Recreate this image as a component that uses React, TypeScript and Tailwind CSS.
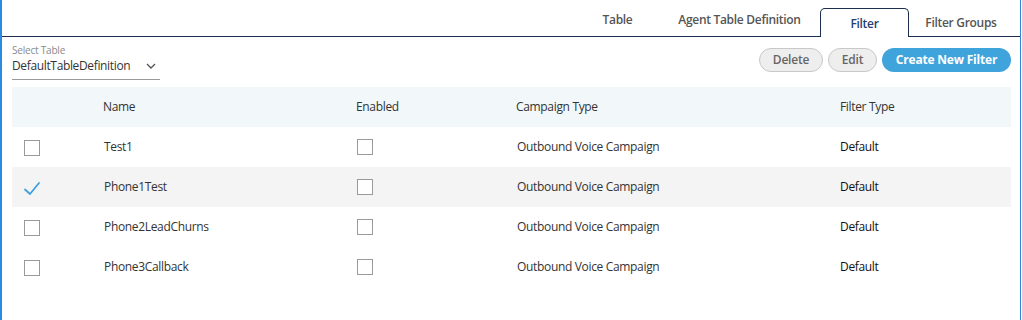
import React from "react";

const rows = [
  { name: "Test1", checked: false },
  { name: "Phone1Test", checked: true },
  { name: "Phone2LeadChurns", checked: false },
  { name: "Phone3Callback", checked: false },
];

function Box({ className = "" }: { className?: string }) {
  return <div className={`w-4 h-4 border border-[#9a9a9a] bg-white ${className}`} />;
}

function Check() {
  return (
    <svg width="18" height="16" viewBox="0 0 18 16" className="ml-[-1px] mt-[1px]">
      <path d="M2 9.5 L7 14 L16 3" fill="none" stroke="#3f9fdc" strokeWidth="1.8" strokeLinecap="round" strokeLinejoin="round" />
    </svg>
  );
}

export default function App() {
  const font = { fontFamily: '"Open Sans", "Noto Sans", sans-serif' };
  return (
    <div className="w-[1022px] h-[320px] bg-white overflow-hidden" style={font}>
      <div className="w-[1021px] h-[320px] border-l-2 border-r border-[#2a8be0] flex flex-col">
        {/* Tabs */}
        <div className="h-[37px] border-b border-[#1c2d4d] flex justify-end items-end pr-[7px] text-[12px] font-semibold text-[#555] tracking-[-0.3px]">
          <div className="w-[83px] h-[28px] flex items-start justify-center pt-[3px]">Table</div>
          <div className="w-[161px] h-[28px] flex items-start justify-center pt-[3px]">Agent Table Definition</div>
          <div className="w-[89px] h-[29px] -mb-px bg-white border border-b-0 border-[#1c2d4d] rounded-t-[5px] flex items-start justify-center pt-[6px] text-[#1f3f73]">Filter</div>
          <div className="w-[104px] h-[28px] flex items-start justify-center pt-[6px]">Filter Groups</div>
        </div>

        <div className="pl-[10px] pr-[9px] pt-[7px]">
          {/* Controls */}
          <div className="flex justify-between items-start h-[43px]">
            <div className="w-[148px] border-b border-[#9a9a9a] h-[36px] flex flex-col">
              <div className="text-[10px] leading-[12px] text-[#8a8a8a] tracking-[-0.2px]">Select Table</div>
              <div className="flex items-center justify-between h-[20px] pr-[4px]">
                <span className="text-[12px] text-[#333] tracking-[-0.35px]">DefaultTableDefinition</span>
                <svg width="10" height="6" viewBox="0 0 10 6">
                  <path d="M1 1 L5 5 L9 1" fill="none" stroke="#555" strokeWidth="1.3" />
                </svg>
              </div>
            </div>
            <div className="flex gap-[5px] mt-[4px] tracking-[-0.2px]">
              <button className="h-[24px] w-[64px] rounded-full border border-[#c8c8c8] bg-[#eeeeee] text-[12px] font-semibold text-[#666]">Delete</button>
              <button className="h-[24px] w-[49px] rounded-full border border-[#c8c8c8] bg-[#eeeeee] text-[12px] font-semibold text-[#666]">Edit</button>
              <button className="h-[24px] w-[129px] rounded-full bg-[#3fa3dc] text-[12px] font-bold text-white">Create New Filter</button>
            </div>
          </div>

          {/* Table */}
          <div className="w-[999px] text-[12px] text-[#333] tracking-[-0.33px]">
            <div className="grid grid-cols-[91px_253px_160px_324px_1fr] h-[40px] items-center bg-[#f2f7fa]">
              <div />
              <div>Name</div>
              <div>Enabled</div>
              <div>Campaign Type</div>
              <div>Filter Type</div>
            </div>
            {rows.map((r, i) => (
              <div key={r.name} className={`grid grid-cols-[91px_253px_160px_324px_1fr] h-[40px] items-center ${i === 1 ? "bg-[#f4f4f4]" : "bg-white"}`}>
                <div className="pl-[12px] flex items-center">{r.checked ? <Check /> : <Box className="mt-[2px]" />}</div>
                <div className="pl-px">{r.name}</div>
                <div className="pl-px"><Box /></div>
                <div className="pl-px">Outbound Voice Campaign</div>
                <div className="text-[#111]">Default</div>
              </div>
            ))}
          </div>
        </div>
      </div>
    </div>
  );
}
